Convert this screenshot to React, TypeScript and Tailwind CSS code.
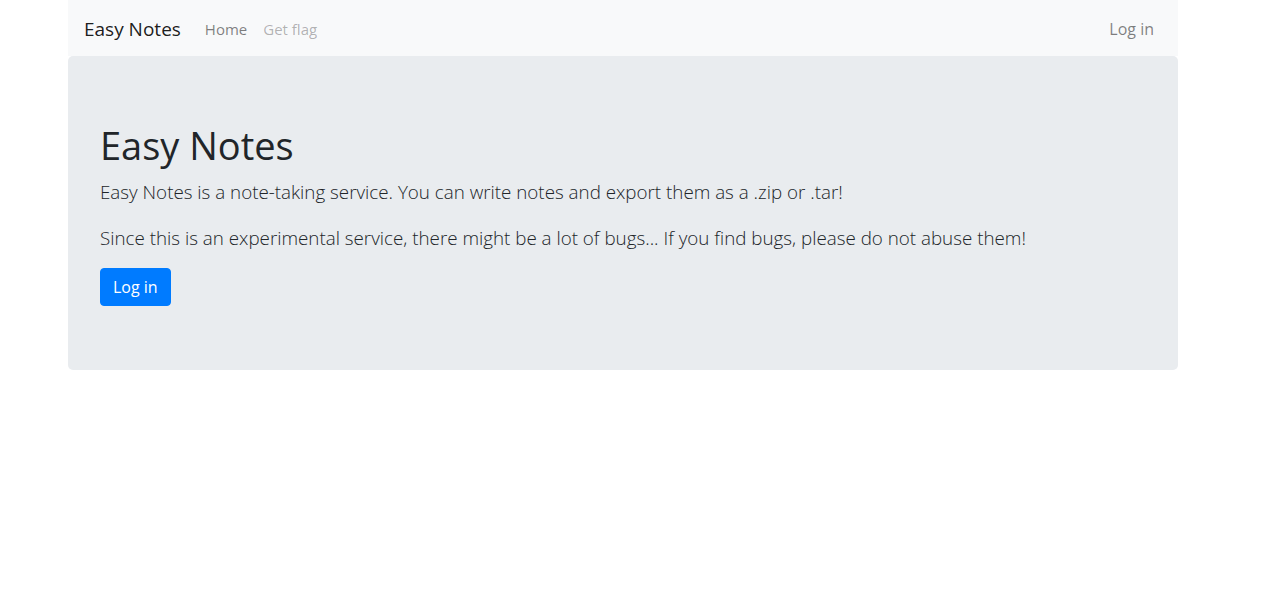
export default function App() {
  return (
    <div
      className="min-h-[608px] bg-white text-[16px] text-[#212529]"
      style={{ fontFamily: '"Open Sans", "Liberation Sans", sans-serif' }}
    >
      <div className="ml-[68px] w-[1110px]">
        <nav className="flex h-[56px] items-center bg-[#f8f9fa] px-4 pt-[2px]">
          <a className="mr-4 py-[5px] text-[19px] leading-[30px] text-black/90">Easy Notes</a>
          <ul className="flex text-[15px]">
            <li className="px-2 leading-6 text-black/50">Home</li>
            <li className="px-2 leading-6 text-black/30">Get flag</li>
          </ul>
          <ul className="ml-auto flex">
            <li className="px-2 leading-6 text-black/50">Log in</li>
          </ul>
        </nav>
        <div className="rounded-[5px] bg-[#e9ecef] px-8 py-16">
          <h1 className="mb-2 pt-[2px] text-[38px] leading-[46px] font-normal">Easy Notes</h1>
          <p className="mb-4 pt-[2px] text-[18.8px] leading-[28px] font-light">
            Easy Notes is a note-taking service. You can write notes and export them as a .zip or .tar!
          </p>
          <p className="mb-4 pt-[2px] text-[18.8px] leading-[28px] font-light">
            Since this is an experimental service, there might be a lot of bugs... If you find bugs, please do not abuse them!
          </p>
          <button className="rounded-[4px] border border-[#007bff] bg-[#007bff] px-3 py-1.5 text-[16px] leading-6 text-white">
            Log in
          </button>
        </div>
      </div>
    </div>
  );
}
